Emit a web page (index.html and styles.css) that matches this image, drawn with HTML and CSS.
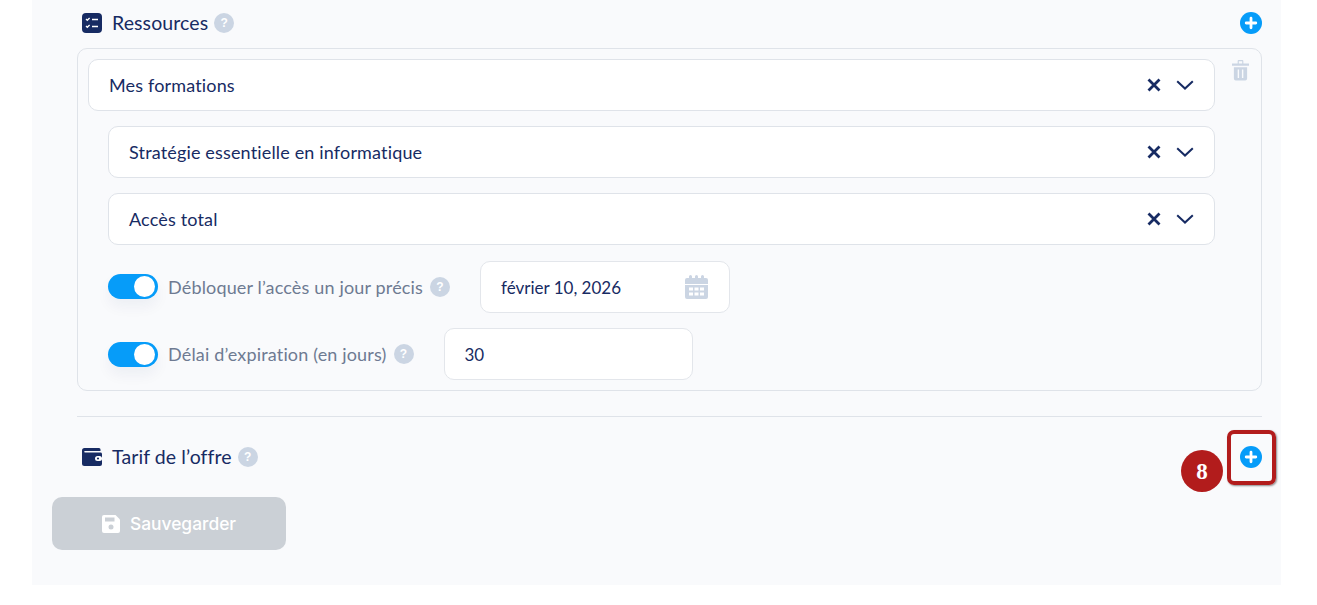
FILE: index.html
```html
<!DOCTYPE html>
<html lang="fr">
<head>
<meta charset="utf-8">
<title>Ressources</title>
<link rel="stylesheet" href="styles.css">
</head>
<body>
<main class="panel">
  <section class="content">
    <header class="section-head">
      <svg class="head-icon" viewBox="0 0 20 20"><rect width="20" height="20" rx="4" fill="#172b63"/><path d="M4 6l1.300 1.300L7.600 5M4 13l1.300 1.300L7.600 12" fill="none" stroke="#fff" stroke-width="1.300"/><path d="M10 6.500h6M10 13.500h6" stroke="#fff" stroke-width="1.500"/></svg>
      <h2 class="section-title">Ressources</h2>
      <span class="help">?</span>
      <svg class="plus" viewBox="0 0 22 22"><circle cx="11" cy="11" r="11" fill="#069cf9"/><path d="M11 6.200v9.600M6.200 11h9.600" stroke="#fff" stroke-width="2.800" stroke-linecap="round"/></svg>
    </header>

    <div class="card">
      <div class="card-main">
        <div class="select"><span>Mes formations</span>
          <svg class="ico-x" viewBox="0 0 14 14"><path d="M1.500 1.500l11 11M12.500 1.500l-11 11" stroke="#172b63" stroke-width="2.800"/></svg>
          <svg class="ico-chev" viewBox="0 0 18 10"><path d="M1.200 1.200L9 8.600l7.800-7.400" fill="none" stroke="#172b63" stroke-width="2"/></svg>
        </div>
        <div class="nested">
          <div class="select"><span>Stratégie essentielle en informatique</span>
            <svg class="ico-x" viewBox="0 0 14 14"><path d="M1.500 1.500l11 11M12.500 1.500l-11 11" stroke="#172b63" stroke-width="2.800"/></svg>
            <svg class="ico-chev" viewBox="0 0 18 10"><path d="M1.200 1.200L9 8.600l7.800-7.400" fill="none" stroke="#172b63" stroke-width="2"/></svg>
          </div>
          <div class="select"><span>Accès total</span>
            <svg class="ico-x" viewBox="0 0 14 14"><path d="M1.500 1.500l11 11M12.500 1.500l-11 11" stroke="#172b63" stroke-width="2.800"/></svg>
            <svg class="ico-chev" viewBox="0 0 18 10"><path d="M1.200 1.200L9 8.600l7.800-7.400" fill="none" stroke="#172b63" stroke-width="2"/></svg>
          </div>
          <div class="opt-row opt-row-first">
            <span class="toggle"></span>
            <span class="opt-label">Débloquer l’accès un jour précis</span>
            <span class="help">?</span>
            <div class="field field-date"><span>février 10, 2026</span>
              <svg class="ico-cal" viewBox="0 0 25 25"><path d="M3 3h2V1.500a1.500 1.500 0 0 1 3 0V3h3V1.500a1.500 1.500 0 0 1 3 0V3h3V1.500a1.500 1.500 0 0 1 3 0V3h2a2 2 0 0 1 2 2v4H1V5a2 2 0 0 1 2-2zM1 10h23v12a2 2 0 0 1-2 2H3a2 2 0 0 1-2-2z" fill="#cbd5e3"/><path d="M5 12.500h4v3H5zM10.500 12.500h4v3h-4zM16 12.500h4v3h-4zM5 17.500h4v3H5zM10.500 17.500h4v3h-4zM16 17.500h4v3h-4z" fill="#fff"/></svg>
            </div>
          </div>
          <div class="opt-row">
            <span class="toggle"></span>
            <span class="opt-label">Délai d’expiration (en jours)</span>
            <span class="help">?</span>
            <div class="field field-days"><span>30</span></div>
          </div>
        </div>
      </div>
      <svg class="ico-trash" viewBox="0 0 18 22"><path d="M0 4h18v2.500H0zM6 4V1.500A1 1 0 0 1 7 .5h4a1 1 0 0 1 1 1V4h-1.200V1.700H7.200V4z" fill="#cbd5e3"/><path d="M2 8h14v12a2 2 0 0 1-2 2H4a2 2 0 0 1-2-2zM6 10.500V19.500h1.500v-9zM10.500 10.500v9H12v-9z" fill="#cbd5e3" fill-rule="evenodd"/></svg>
    </div>

    <hr class="divider">

    <header class="section-head section-head-tarif">
      <svg class="head-icon" viewBox="0 0 20 18"><path d="M2.500 0H17a1.500 1.500 0 0 1 1.500 1.500V3H3a.8.8 0 0 0 0 1.600h15.500A1.500 1.500 0 0 1 20 6v10a2 2 0 0 1-2 2H2.500A2.500 2.500 0 0 1 0 15.500v-13A2.500 2.500 0 0 1 2.500 0z" fill="#172b63"/><rect x="13" y="8" width="7" height="5" rx="2.500" fill="#fff"/><circle cx="16" cy="10.500" r="1.100" fill="#172b63"/></svg>
      <h2 class="section-title">Tarif de l’offre</h2>
      <span class="help">?</span>
      <svg class="plus" viewBox="0 0 22 22"><circle cx="11" cy="11" r="11" fill="#069cf9"/><path d="M11 6.200v9.600M6.200 11h9.600" stroke="#fff" stroke-width="2.800" stroke-linecap="round"/></svg>
    </header>
  </section>

  <button class="save" type="button">
    <svg class="ico-save" viewBox="0 0 18 18"><path d="M2 0h11.500L18 4.500V16a2 2 0 0 1-2 2H2a2 2 0 0 1-2-2V2a2 2 0 0 1 2-2z" fill="#fff"/><rect x="3" y="2.500" width="9.500" height="4" fill="#cbd0d6"/><circle cx="9" cy="12" r="2.500" fill="#cbd0d6"/></svg>
    Sauvegarder
  </button>
</main>
<span class="marker">8</span>
<span class="highlight"></span>
</body>
</html>
```
FILE: styles.css
```css
* { box-sizing: border-box; }
html, body { margin: 0; padding: 0; }
body {
  height: 605px;
  overflow: hidden;
  background: #fff;
  font-family: "Lato", "Noto Sans", sans-serif;
  color: #172b63;
  position: relative;
}
.panel {
  margin-left: 32px;
  width: 1249px;
  height: 585px;
  background: #f9fafc;
  padding: 11px 19px 0 20px;
}
.content { padding-left: 25px; }
.section-head {
  display: flex;
  align-items: center;
  height: 24px;
  padding-left: 5px;
}
.section-head-tarif { margin-top: 28px; }
.head-icon { width: 20px; height: 20px; flex: none; }
.section-head-tarif .head-icon { height: 18px; }
.section-title {
  margin: 0 6px 0 10px;
  font-size: 19.500px;
  font-weight: 400;
  letter-spacing: .1px;
  line-height: 24px;
  color: #172b63;
}
.help {
  width: 20px;
  height: 20px;
  flex: none;
  border-radius: 50%;
  background: #cbd5e3;
  color: #fff;
  font: 700 12px/20px "Liberation Sans", sans-serif;
  text-align: center;
}
.plus { width: 22px; height: 22px; margin-left: auto; flex: none; }
.card {
  margin-top: 13px;
  height: 343px;
  border: 1px solid #dfe3e9;
  border-radius: 10px;
  padding: 10px 10px 0;
  display: flex;
  align-items: flex-start;
}
.card-main { width: 1127px; flex: none; }
.select {
  height: 52px;
  background: #fff;
  border: 1px solid #dfe3e9;
  border-radius: 10px;
  padding: 0 20px;
  display: flex;
  align-items: center;
  font-size: 18px;
  letter-spacing: .16px;
  color: #172b63;
}
.select > span { flex: 1; }
.ico-x { width: 14px; height: 14px; margin-right: 15px; }
.ico-chev { width: 18px; height: 10px; }
.nested {
  padding-left: 20px;
  padding-top: 15px;
  display: flex;
  flex-direction: column;
  gap: 15px;
}
.opt-row { display: flex; align-items: center; height: 52px; }
.opt-row-first { margin-top: 1px; }
.opt-row-first .toggle { margin-top: -2px; }
.toggle {
  width: 50px;
  height: 25px;
  flex: none;
  border-radius: 13px;
  background: #069cf9;
  position: relative;
  box-shadow: 0 8px 14px rgba(23, 43, 99, .05);
}
.toggle::after {
  content: "";
  position: absolute;
  right: 3px;
  top: 2px;
  width: 21px;
  height: 21px;
  border-radius: 50%;
  background: #fff;
}
.opt-label {
  margin: 0 7px 0 10px;
  font-size: 18px;
  letter-spacing: .16px;
  color: #6e7a92;
}
.field {
  height: 52px;
  background: #fff;
  border: 1px solid #e3e6eb;
  border-radius: 10px;
  padding: 0 20px;
  display: flex;
  align-items: center;
  justify-content: space-between;
  font-size: 17px;
  color: #172b63;
}
.field-date { width: 250px; margin-left: 30px; }
.field-days { width: 249px; margin-left: 30px; }
.ico-cal { width: 25px; height: 25px; }
.ico-trash { width: 17px; height: 22px; margin-left: 17px; flex: none; }
.divider {
  margin: 25px 0 0;
  border: 0;
  border-top: 1px solid #dfe3e9;
}
.save {
  display: flex;
  align-items: center;
  justify-content: center;
  gap: 10px;
  margin-top: 28px;
  width: 234px;
  height: 53px;
  border: 0;
  border-radius: 10px;
  background: #cbd0d6;
  color: #fff;
  font: 500 17.400px "Inter", sans-serif;
}
.ico-save { width: 18px; height: 18px; }
.marker {
  position: absolute;
  left: 1181px;
  top: 450px;
  width: 42px;
  height: 42px;
  border-radius: 50%;
  background: #b21c1c;
  color: #fff;
  font: 700 23px/43px "Liberation Serif", serif;
  text-align: center;
}
.highlight {
  position: absolute;
  left: 1227px;
  top: 430px;
  width: 49px;
  height: 55px;
  border: 4px solid #b21c1c;
  border-radius: 7px;
  box-shadow: 1px 1px 2px rgba(0, 0, 0, .45);
}
```
